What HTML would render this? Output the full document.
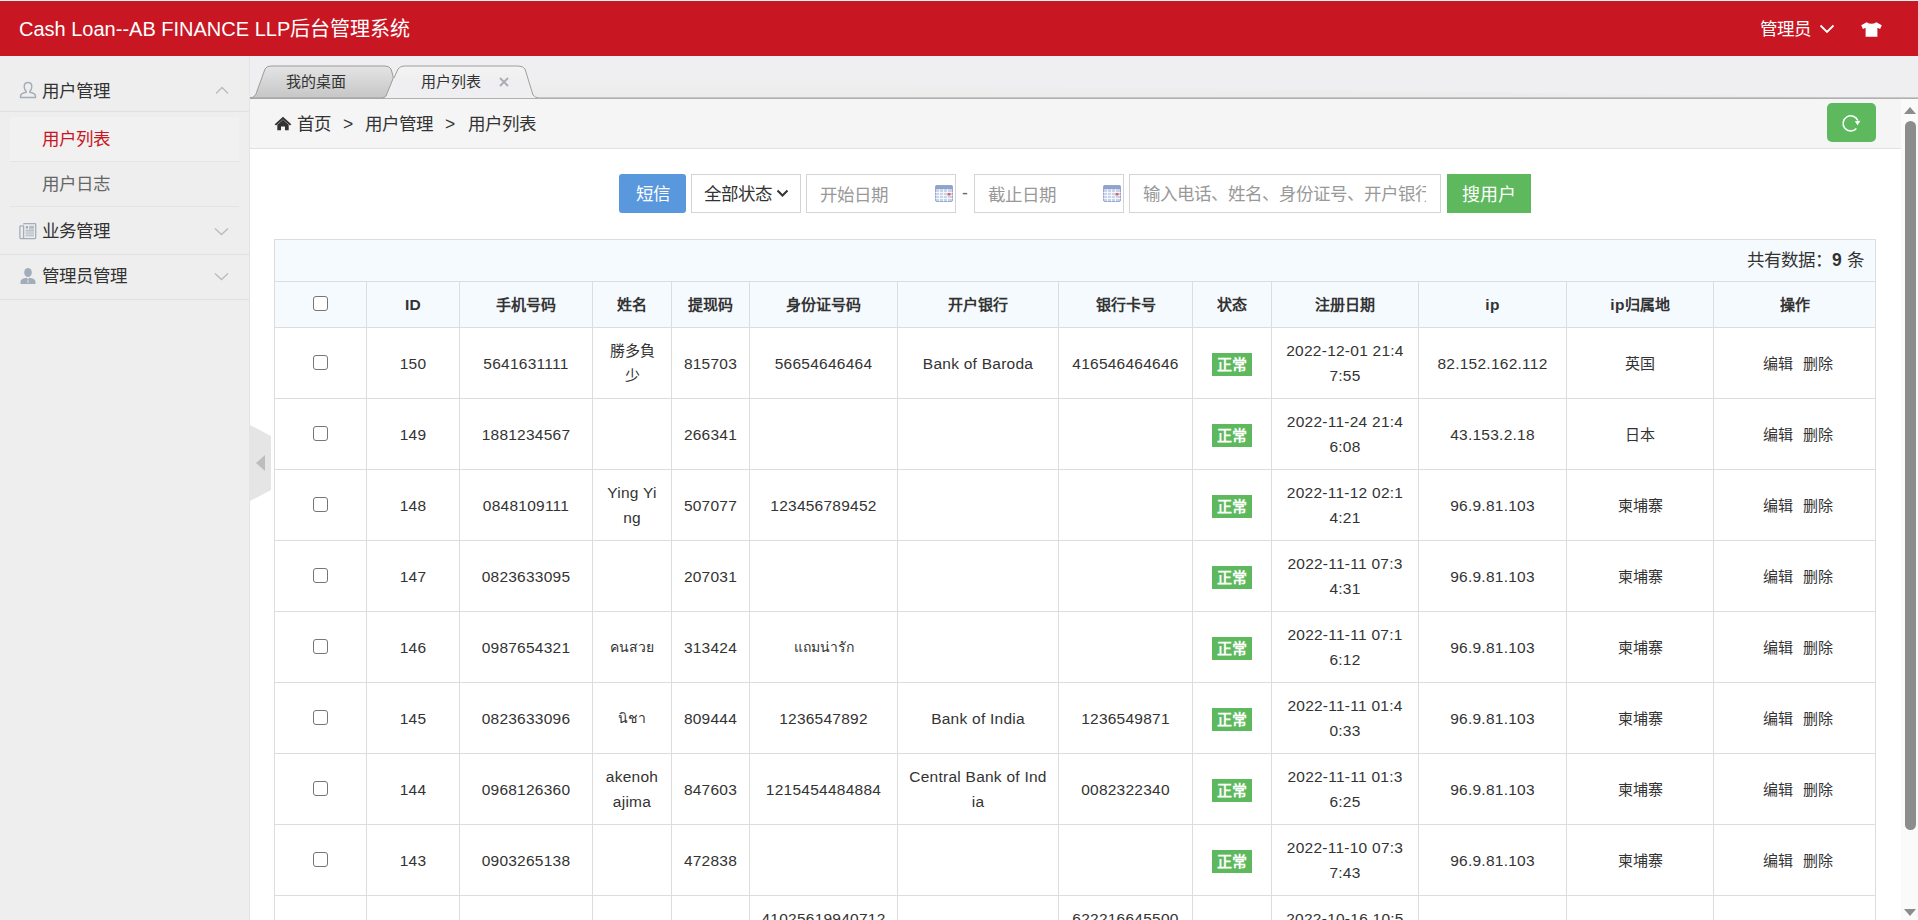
<!DOCTYPE html>
<html lang="zh-CN"><head><meta charset="utf-8">
<style>
*{margin:0;padding:0;box-sizing:border-box}
html,body{width:1918px;height:920px;overflow:hidden;background:#fff;font-family:"Liberation Sans",sans-serif;color:#333}
.abs{position:absolute}
#topline{position:absolute;left:0;top:0;width:1918px;height:1px;background:#e6f4f4}
#header{position:absolute;left:0;top:1px;width:1918px;height:55px;background:#c81623;color:#fff}
#logo{position:absolute;left:19px;top:14px;font-size:20px;line-height:28px;white-space:nowrap}
#admin{position:absolute;left:1760px;top:15px;font-size:17.5px;line-height:26px;white-space:nowrap}
#aside{position:absolute;left:0;top:56px;width:250px;height:864px;background:#eee;border-right:1px solid #e3e3e3}
.dt{position:absolute;left:0;width:249px;height:45px;border-bottom:1px solid #e0e0e0;font-size:17.5px;line-height:26px;color:#333}
.dt span.t{position:absolute;left:42px;top:9px;white-space:nowrap}
.li{position:absolute;left:10px;width:229px;border-bottom:1px solid #e4e4e4;font-size:17.5px;line-height:26px;color:#666}
.li span{position:absolute;left:32px;white-space:nowrap}
#tabnav{position:absolute;left:250px;top:56px;width:1668px;height:43px;background:#efeef0}
#crumb{position:absolute;left:250px;top:99px;width:1651px;height:50px;background:#f5f5f5;border-bottom:1px solid #e2e2e2}
.crumbt{position:absolute;top:111px;font-size:17.5px;line-height:26px;white-space:nowrap;color:#333}
#sb{position:absolute;left:1901px;top:99px;width:17px;height:821px;background:#fafafa}
#thumb{position:absolute;left:1905px;top:121px;width:11px;height:709px;border-radius:6px;background:#8c8c8c}
.btn{position:absolute;color:#fff;font-size:17.5px;line-height:38px;text-align:center;border-radius:3px;white-space:nowrap}
.inp{position:absolute;border:1px solid #d4d4d4;background:#fff;font-size:17.5px;line-height:36px;white-space:nowrap;overflow:hidden;color:#999}
.vl{position:absolute;width:1px;background:#ddd}
.hl{position:absolute;height:1px;background:#ddd}
.c{position:absolute;display:flex;align-items:center;justify-content:center;text-align:center;font-size:15px;line-height:25px;white-space:nowrap;color:#333;overflow:hidden}
.hd{font-weight:bold;background:#f5fafe}
.th{background:#f5fafe}
.cb{display:inline-block;vertical-align:top;margin-top:4px;width:15px;height:15px;border:1.5px solid #767676;border-radius:3px;background:#fff}
.lbl{display:inline-block;position:relative;top:1px;background:#5eb95e;color:#fff;font-weight:bold;font-size:15px;line-height:23px;height:23px;width:40px;text-align:center}
.l{font-size:15.5px;letter-spacing:.25px}
.thai{font-size:14px}
.ops{padding-left:7px}
.op{display:inline-block}
.op2{margin-left:10px}
#caption{position:absolute;left:275px;top:240px;width:1600px;height:41px;background:#f5fafe}
#captxt{position:absolute;right:48px;top:246px;font-size:17.5px;line-height:28px;white-space:nowrap}
</style></head>
<body>
<div id="topline"></div>
<div id="header">
  <div id="logo">Cash Loan--AB FINANCE LLP后台管理系统</div>
  <div id="admin">管理员</div>
  <svg class="abs" style="left:1818.5px;top:23px" width="16" height="10" viewBox="0 0 16 10"><path d="M1.5 1.5 L8 8 L14.5 1.5" fill="none" stroke="#fff" stroke-width="1.8"/></svg>
  <svg class="abs" style="left:1861px;top:21px" width="21" height="15" viewBox="0 0 21 15"><path d="M5.6 0.2 Q10.5 3.4 15.4 0.2 L20.8 3.2 L19.1 6.9 L16.4 5.7 L16.4 14.8 L4.6 14.8 L4.6 5.7 L1.9 6.9 L0.2 3.2 Z" fill="#fff"/></svg>
</div>

<div id="aside">
  <div class="dt" style="top:11px"><span class="t" style="top:11px">用户管理</span></div>
  <div class="li" style="top:61px;height:45px;background:#f1f1f1"><span style="top:9px;color:#c81623">用户列表</span></div>
  <div class="li" style="top:106px;height:45px"><span style="top:9px">用户日志</span></div>
  <div class="dt" style="top:153px;height:46px"><span class="t" style="top:9px">业务管理</span></div>
  <div class="dt" style="top:199px"><span class="t" style="top:8px">管理员管理</span></div>
  <!-- icons -->
  <svg class="abs" style="left:19px;top:25px" width="18" height="18" viewBox="0 0 18 18"><path d="M9 1.5 C6.3 1.5 5.2 3.6 5.2 5.8 C5.2 8 6.3 9.6 7.2 10.3 L7.2 11.2 C4.5 11.8 1.5 13 1.5 15 L1.5 16.5 L16.5 16.5 L16.5 15 C16.5 13 13.5 11.8 10.8 11.2 L10.8 10.3 C11.7 9.6 12.8 8 12.8 5.8 C12.8 3.6 11.7 1.5 9 1.5 Z" fill="none" stroke="#a3adba" stroke-width="1.4"/></svg>
  <svg class="abs" style="left:215px;top:30px" width="14" height="9" viewBox="0 0 14 9"><path d="M1 7.5 L7 1.5 L13 7.5" fill="none" stroke="#bbb" stroke-width="1.3"/></svg>
  <svg class="abs" style="left:19px;top:166px" width="18" height="18" viewBox="0 0 18 18"><path d="M4.6 2.4 Q4.6 1.6 5.4 1.6 L15.9 1.6 Q16.7 1.6 16.7 2.4 L16.7 15.8 Q16.7 16.6 15.9 16.6 L1.7 16.6 Q0.9 16.6 0.9 15.8 L0.9 4.6 Q0.9 3.8 1.7 3.8 L4.6 3.8 M4.6 3.8 V16.6" fill="none" stroke="#a3adba" stroke-width="1.3"/><rect x="6.9" y="4" width="2.1" height="2.7" fill="#a3adba"/><path d="M10 4.3 H15 M10 5.6 H15 M10 6.9 H15 M6.5 8.3 H15 M6.5 10 H15 M6.5 11.9 H15 M6.5 13.8 H15" stroke="#a3adba" stroke-width="0.9"/></svg>
  <svg class="abs" style="left:214px;top:171px" width="15" height="9" viewBox="0 0 15 9"><path d="M1 1.5 L7.5 7.5 L14 1.5" fill="none" stroke="#bbb" stroke-width="1.3"/></svg>
  <svg class="abs" style="left:19px;top:211px" width="18" height="18" viewBox="0 0 18 18"><ellipse cx="9" cy="5.5" rx="3.8" ry="4.5" fill="#a3adba"/><path d="M1.5 17 L1.5 15 C1.5 12.5 4.5 11 7.5 10.8 L9 12 L10.5 10.8 C13.5 11 16.5 12.5 16.5 15 L16.5 17 Z" fill="#a3adba"/><path d="M9 12.5 V16" stroke="#eee" stroke-width="0.8"/></svg>
  <svg class="abs" style="left:214px;top:216px" width="15" height="9" viewBox="0 0 15 9"><path d="M1 1.5 L7.5 7.5 L14 1.5" fill="none" stroke="#bbb" stroke-width="1.3"/></svg>
</div>

<div id="tabnav"></div>
<svg class="abs" style="left:250px;top:56px" width="1668" height="43" viewBox="0 0 1668 43">
  <defs>
    <linearGradient id="g1" x1="0" y1="0" x2="0" y2="1"><stop offset="0" stop-color="#e4e4e4"/><stop offset="1" stop-color="#c6c6c6"/></linearGradient>
    <linearGradient id="g2" x1="0" y1="0" x2="0" y2="1"><stop offset="0" stop-color="#f3f3f3"/><stop offset="1" stop-color="#ebebeb"/></linearGradient>
  </defs>
  <path d="M144 22 L148 13 Q150.5 10 154 10 L268 10 Q273 10 275 13 L283 39 Q285 42 289 42 L1668 42" fill="url(#g2)" stroke="#a0a0a0" stroke-width="1"/>
  <rect x="0" y="42" width="1668" height="1" fill="#b0b0b0"/>
  <path d="M0 42 Q4 42 6 38 L15 13 Q16.5 10 21 10 L135 10 Q139 10 141 13 L143 20 Q143.5 22 142.5 24 L136 40 Q135 42 131 42 Z" fill="url(#g1)" stroke="#9c9c9c" stroke-width="1"/>
  <text x="36" y="31" font-size="15" fill="#333" font-family="Liberation Sans, sans-serif">我的桌面</text>
  <text x="171" y="31" font-size="15" fill="#333" font-family="Liberation Sans, sans-serif">用户列表</text>
  <path d="M250 22 L258 30 M258 22 L250 30" stroke="#a9aeb4" stroke-width="1.8"/>
</svg>

<div id="crumb"></div>
<svg class="abs" style="left:274px;top:116px" width="18" height="15" viewBox="0 0 18 15"><path d="M9 0.8 L17.3 8.2 L16 9.6 L9 3.4 L2 9.6 L0.7 8.2 Z" fill="#333"/><path d="M3.3 8.7 L9 3.8 L14.7 8.7 L14.7 14.2 L11 14.2 L11 10.5 L7 10.5 L7 14.2 L3.3 14.2 Z" fill="#333"/></svg>
<div class="crumbt" style="left:297px">首页</div><div class="crumbt" style="left:343px">&gt;</div><div class="crumbt" style="left:365px">用户管理</div><div class="crumbt" style="left:445px">&gt;</div><div class="crumbt" style="left:468px">用户列表</div>
<div class="btn" style="left:1827px;top:103px;width:49px;height:39px;background:#5eb95e;border-radius:5px"></div>
<svg class="abs" style="left:1840px;top:112px" width="22" height="22" viewBox="0 0 22 22"><path d="M16.4 16.4 A7.6 7.6 0 1 1 17.8 8.6" fill="none" stroke="#fff" stroke-width="1.5"/><path d="M14.8 9.2 L20.4 8.8 L17.6 13.2 Z" fill="#fff"/></svg>

<div id="sb"></div>
<div id="thumb"></div>
<svg class="abs" style="left:1903px;top:106px" width="14" height="9" viewBox="0 0 14 9"><path d="M1 8 L7 1 L13 8 Z" fill="#8c8c8c"/></svg>
<svg class="abs" style="left:1903px;top:908px" width="14" height="9" viewBox="0 0 14 9"><path d="M1 1 L7 8 L13 1 Z" fill="#8c8c8c"/></svg>

<!-- search bar -->
<div class="btn" style="left:619px;top:174px;width:67px;height:39px;background:#5a98de;line-height:40px">短信</div>
<div class="inp" style="left:691px;top:174px;width:110px;height:39px;color:#333"><span style="position:absolute;left:12px;top:1px">全部状态</span></div>
<svg class="abs" style="left:776px;top:189px" width="13" height="9" viewBox="0 0 13 9"><path d="M1.5 1.5 L6.5 6.5 L11.5 1.5" fill="none" stroke="#333" stroke-width="2"/></svg>
<div class="inp" style="left:806px;top:174px;width:150px;height:39px"><span style="position:absolute;left:13px;top:2px">开始日期</span></div>
<div class="abs" style="left:962px;top:181px;font-size:17.5px;line-height:24px;color:#666">-</div>
<div class="inp" style="left:974px;top:174px;width:150px;height:39px"><span style="position:absolute;left:13px;top:2px">截止日期</span></div>
<div class="inp" style="left:1129px;top:174px;width:312px;height:39px"><span style="position:absolute;left:13px;top:1px;width:283px;overflow:hidden">输入电话、姓名、身份证号、开户银行</span></div>
<div class="btn" style="left:1447px;top:174px;width:84px;height:39px;background:#5eb95e;border-radius:0;line-height:42px;font-size:18px">搜用户</div>
<svg class="abs" style="left:935px;top:185px" width="18" height="17" viewBox="0 0 18 17"><rect x="0.5" y="0.5" width="17" height="16" rx="1.5" fill="#c8d4ea" stroke="#98a8c8"/><rect x="0.5" y="0.5" width="17" height="3.5" fill="#8fa3cc"/><path d="M0.5 7.5 H17.5 M0.5 10.5 H17.5 M0.5 13.5 H17.5 M4.5 4 V16.5 M8.5 4 V16.5 M12.5 4 V16.5" stroke="#f4f6fb" stroke-width="1"/><rect x="12.5" y="8" width="3" height="2.5" fill="#e06060"/></svg>
<svg class="abs" style="left:1103px;top:185px" width="18" height="17" viewBox="0 0 18 17"><rect x="0.5" y="0.5" width="17" height="16" rx="1.5" fill="#c8d4ea" stroke="#98a8c8"/><rect x="0.5" y="0.5" width="17" height="3.5" fill="#8fa3cc"/><path d="M0.5 7.5 H17.5 M0.5 10.5 H17.5 M0.5 13.5 H17.5 M4.5 4 V16.5 M8.5 4 V16.5 M12.5 4 V16.5" stroke="#f4f6fb" stroke-width="1"/><rect x="12.5" y="8" width="3" height="2.5" fill="#e06060"/></svg>

<!-- table -->
<div id="caption"></div>
<div class="abs" style="left:274px;top:239px;width:1602px;height:1px;background:#e8e8e8"></div>
<div id="captxt" style="left:1747px;right:auto">共有数据：<b>9</b> 条</div>
<div class="vl" style="left:274px;top:239px;height:681px"></div>
<div class="vl" style="left:366px;top:281px;height:639px"></div>
<div class="vl" style="left:459px;top:281px;height:639px"></div>
<div class="vl" style="left:592px;top:281px;height:639px"></div>
<div class="vl" style="left:671px;top:281px;height:639px"></div>
<div class="vl" style="left:749px;top:281px;height:639px"></div>
<div class="vl" style="left:897px;top:281px;height:639px"></div>
<div class="vl" style="left:1058px;top:281px;height:639px"></div>
<div class="vl" style="left:1192px;top:281px;height:639px"></div>
<div class="vl" style="left:1271px;top:281px;height:639px"></div>
<div class="vl" style="left:1418px;top:281px;height:639px"></div>
<div class="vl" style="left:1566px;top:281px;height:639px"></div>
<div class="vl" style="left:1713px;top:281px;height:639px"></div>
<div class="vl" style="left:1875px;top:239px;height:681px"></div>
<div class="hl" style="left:274px;top:239px;width:1602px"></div>
<div class="hl" style="left:274px;top:281px;width:1602px"></div>
<div class="hl" style="left:274px;top:327px;width:1602px"></div>
<div class="hl" style="left:274px;top:398px;width:1602px"></div>
<div class="hl" style="left:274px;top:469px;width:1602px"></div>
<div class="hl" style="left:274px;top:540px;width:1602px"></div>
<div class="hl" style="left:274px;top:611px;width:1602px"></div>
<div class="hl" style="left:274px;top:682px;width:1602px"></div>
<div class="hl" style="left:274px;top:753px;width:1602px"></div>
<div class="hl" style="left:274px;top:824px;width:1602px"></div>
<div class="hl" style="left:274px;top:895px;width:1602px"></div>
<div class="hl" style="left:274px;top:966px;width:1602px"></div>
<div class="c th" style="left:275px;top:282px;width:91px;height:45px"><div><span class="cb"></span></div></div>
<div class="c hd" style="left:367px;top:282px;width:92px;height:45px"><div><span class="l">ID</span></div></div>
<div class="c hd" style="left:460px;top:282px;width:132px;height:45px"><div>手机号码</div></div>
<div class="c hd" style="left:593px;top:282px;width:78px;height:45px"><div>姓名</div></div>
<div class="c hd" style="left:672px;top:282px;width:77px;height:45px"><div>提现码</div></div>
<div class="c hd" style="left:750px;top:282px;width:147px;height:45px"><div>身份证号码</div></div>
<div class="c hd" style="left:898px;top:282px;width:160px;height:45px"><div>开户银行</div></div>
<div class="c hd" style="left:1059px;top:282px;width:133px;height:45px"><div>银行卡号</div></div>
<div class="c hd" style="left:1193px;top:282px;width:78px;height:45px"><div>状态</div></div>
<div class="c hd" style="left:1272px;top:282px;width:146px;height:45px"><div>注册日期</div></div>
<div class="c hd" style="left:1419px;top:282px;width:147px;height:45px"><div><span class="l">ip</span></div></div>
<div class="c hd" style="left:1567px;top:282px;width:146px;height:45px"><div><span class="l">ip</span>归属地</div></div>
<div class="c hd" style="left:1714px;top:282px;width:161px;height:45px"><div>操作</div></div>
<div class="c" style="left:275px;top:328px;width:91px;height:70px"><div><span class="cb"></span></div></div>
<div class="c" style="left:367px;top:328px;width:92px;height:70px"><div><span class="l">150</span></div></div>
<div class="c" style="left:460px;top:328px;width:132px;height:70px"><div><span class="l">5641631111</span></div></div>
<div class="c" style="left:593px;top:328px;width:78px;height:70px"><div>勝多負<br>少</div></div>
<div class="c" style="left:672px;top:328px;width:77px;height:70px"><div><span class="l">815703</span></div></div>
<div class="c" style="left:750px;top:328px;width:147px;height:70px"><div><span class="l">56654646464</span></div></div>
<div class="c" style="left:898px;top:328px;width:160px;height:70px"><div><span class="l">Bank of Baroda</span></div></div>
<div class="c" style="left:1059px;top:328px;width:133px;height:70px"><div><span class="l">416546464646</span></div></div>
<div class="c" style="left:1193px;top:328px;width:78px;height:70px"><div><span class="lbl">正常</span></div></div>
<div class="c" style="left:1272px;top:328px;width:146px;height:70px"><div><span class="l">2022-12-01 21:4</span><br><span class="l">7:55</span></div></div>
<div class="c" style="left:1419px;top:328px;width:147px;height:70px"><div><span class="l">82.152.162.112</span></div></div>
<div class="c" style="left:1567px;top:328px;width:146px;height:70px"><div>英国</div></div>
<div class="c ops" style="left:1714px;top:328px;width:161px;height:70px"><div><span class="op">编辑</span><span class="op op2">删除</span></div></div>
<div class="c" style="left:275px;top:399px;width:91px;height:70px"><div><span class="cb"></span></div></div>
<div class="c" style="left:367px;top:399px;width:92px;height:70px"><div><span class="l">149</span></div></div>
<div class="c" style="left:460px;top:399px;width:132px;height:70px"><div><span class="l">1881234567</span></div></div>
<div class="c" style="left:593px;top:399px;width:78px;height:70px"><div></div></div>
<div class="c" style="left:672px;top:399px;width:77px;height:70px"><div><span class="l">266341</span></div></div>
<div class="c" style="left:750px;top:399px;width:147px;height:70px"><div></div></div>
<div class="c" style="left:898px;top:399px;width:160px;height:70px"><div></div></div>
<div class="c" style="left:1059px;top:399px;width:133px;height:70px"><div></div></div>
<div class="c" style="left:1193px;top:399px;width:78px;height:70px"><div><span class="lbl">正常</span></div></div>
<div class="c" style="left:1272px;top:399px;width:146px;height:70px"><div><span class="l">2022-11-24 21:4</span><br><span class="l">6:08</span></div></div>
<div class="c" style="left:1419px;top:399px;width:147px;height:70px"><div><span class="l">43.153.2.18</span></div></div>
<div class="c" style="left:1567px;top:399px;width:146px;height:70px"><div>日本</div></div>
<div class="c ops" style="left:1714px;top:399px;width:161px;height:70px"><div><span class="op">编辑</span><span class="op op2">删除</span></div></div>
<div class="c" style="left:275px;top:470px;width:91px;height:70px"><div><span class="cb"></span></div></div>
<div class="c" style="left:367px;top:470px;width:92px;height:70px"><div><span class="l">148</span></div></div>
<div class="c" style="left:460px;top:470px;width:132px;height:70px"><div><span class="l">0848109111</span></div></div>
<div class="c" style="left:593px;top:470px;width:78px;height:70px"><div><span class="l">Ying Yi</span><br><span class="l">ng</span></div></div>
<div class="c" style="left:672px;top:470px;width:77px;height:70px"><div><span class="l">507077</span></div></div>
<div class="c" style="left:750px;top:470px;width:147px;height:70px"><div><span class="l">123456789452</span></div></div>
<div class="c" style="left:898px;top:470px;width:160px;height:70px"><div></div></div>
<div class="c" style="left:1059px;top:470px;width:133px;height:70px"><div></div></div>
<div class="c" style="left:1193px;top:470px;width:78px;height:70px"><div><span class="lbl">正常</span></div></div>
<div class="c" style="left:1272px;top:470px;width:146px;height:70px"><div><span class="l">2022-11-12 02:1</span><br><span class="l">4:21</span></div></div>
<div class="c" style="left:1419px;top:470px;width:147px;height:70px"><div><span class="l">96.9.81.103</span></div></div>
<div class="c" style="left:1567px;top:470px;width:146px;height:70px"><div>柬埔寨</div></div>
<div class="c ops" style="left:1714px;top:470px;width:161px;height:70px"><div><span class="op">编辑</span><span class="op op2">删除</span></div></div>
<div class="c" style="left:275px;top:541px;width:91px;height:70px"><div><span class="cb"></span></div></div>
<div class="c" style="left:367px;top:541px;width:92px;height:70px"><div><span class="l">147</span></div></div>
<div class="c" style="left:460px;top:541px;width:132px;height:70px"><div><span class="l">0823633095</span></div></div>
<div class="c" style="left:593px;top:541px;width:78px;height:70px"><div></div></div>
<div class="c" style="left:672px;top:541px;width:77px;height:70px"><div><span class="l">207031</span></div></div>
<div class="c" style="left:750px;top:541px;width:147px;height:70px"><div></div></div>
<div class="c" style="left:898px;top:541px;width:160px;height:70px"><div></div></div>
<div class="c" style="left:1059px;top:541px;width:133px;height:70px"><div></div></div>
<div class="c" style="left:1193px;top:541px;width:78px;height:70px"><div><span class="lbl">正常</span></div></div>
<div class="c" style="left:1272px;top:541px;width:146px;height:70px"><div><span class="l">2022-11-11 07:3</span><br><span class="l">4:31</span></div></div>
<div class="c" style="left:1419px;top:541px;width:147px;height:70px"><div><span class="l">96.9.81.103</span></div></div>
<div class="c" style="left:1567px;top:541px;width:146px;height:70px"><div>柬埔寨</div></div>
<div class="c ops" style="left:1714px;top:541px;width:161px;height:70px"><div><span class="op">编辑</span><span class="op op2">删除</span></div></div>
<div class="c" style="left:275px;top:612px;width:91px;height:70px"><div><span class="cb"></span></div></div>
<div class="c" style="left:367px;top:612px;width:92px;height:70px"><div><span class="l">146</span></div></div>
<div class="c" style="left:460px;top:612px;width:132px;height:70px"><div><span class="l">0987654321</span></div></div>
<div class="c" style="left:593px;top:612px;width:78px;height:70px"><div><span class="thai">คนสวย</span></div></div>
<div class="c" style="left:672px;top:612px;width:77px;height:70px"><div><span class="l">313424</span></div></div>
<div class="c" style="left:750px;top:612px;width:147px;height:70px"><div><span class="thai">แถมน่ารัก</span></div></div>
<div class="c" style="left:898px;top:612px;width:160px;height:70px"><div></div></div>
<div class="c" style="left:1059px;top:612px;width:133px;height:70px"><div></div></div>
<div class="c" style="left:1193px;top:612px;width:78px;height:70px"><div><span class="lbl">正常</span></div></div>
<div class="c" style="left:1272px;top:612px;width:146px;height:70px"><div><span class="l">2022-11-11 07:1</span><br><span class="l">6:12</span></div></div>
<div class="c" style="left:1419px;top:612px;width:147px;height:70px"><div><span class="l">96.9.81.103</span></div></div>
<div class="c" style="left:1567px;top:612px;width:146px;height:70px"><div>柬埔寨</div></div>
<div class="c ops" style="left:1714px;top:612px;width:161px;height:70px"><div><span class="op">编辑</span><span class="op op2">删除</span></div></div>
<div class="c" style="left:275px;top:683px;width:91px;height:70px"><div><span class="cb"></span></div></div>
<div class="c" style="left:367px;top:683px;width:92px;height:70px"><div><span class="l">145</span></div></div>
<div class="c" style="left:460px;top:683px;width:132px;height:70px"><div><span class="l">0823633096</span></div></div>
<div class="c" style="left:593px;top:683px;width:78px;height:70px"><div><span class="thai">นิชา</span></div></div>
<div class="c" style="left:672px;top:683px;width:77px;height:70px"><div><span class="l">809444</span></div></div>
<div class="c" style="left:750px;top:683px;width:147px;height:70px"><div><span class="l">1236547892</span></div></div>
<div class="c" style="left:898px;top:683px;width:160px;height:70px"><div><span class="l">Bank of India</span></div></div>
<div class="c" style="left:1059px;top:683px;width:133px;height:70px"><div><span class="l">1236549871</span></div></div>
<div class="c" style="left:1193px;top:683px;width:78px;height:70px"><div><span class="lbl">正常</span></div></div>
<div class="c" style="left:1272px;top:683px;width:146px;height:70px"><div><span class="l">2022-11-11 01:4</span><br><span class="l">0:33</span></div></div>
<div class="c" style="left:1419px;top:683px;width:147px;height:70px"><div><span class="l">96.9.81.103</span></div></div>
<div class="c" style="left:1567px;top:683px;width:146px;height:70px"><div>柬埔寨</div></div>
<div class="c ops" style="left:1714px;top:683px;width:161px;height:70px"><div><span class="op">编辑</span><span class="op op2">删除</span></div></div>
<div class="c" style="left:275px;top:754px;width:91px;height:70px"><div><span class="cb"></span></div></div>
<div class="c" style="left:367px;top:754px;width:92px;height:70px"><div><span class="l">144</span></div></div>
<div class="c" style="left:460px;top:754px;width:132px;height:70px"><div><span class="l">0968126360</span></div></div>
<div class="c" style="left:593px;top:754px;width:78px;height:70px"><div><span class="l">akenoh</span><br><span class="l">ajima</span></div></div>
<div class="c" style="left:672px;top:754px;width:77px;height:70px"><div><span class="l">847603</span></div></div>
<div class="c" style="left:750px;top:754px;width:147px;height:70px"><div><span class="l">1215454484884</span></div></div>
<div class="c" style="left:898px;top:754px;width:160px;height:70px"><div><span class="l">Central Bank of Ind</span><br><span class="l">ia</span></div></div>
<div class="c" style="left:1059px;top:754px;width:133px;height:70px"><div><span class="l">0082322340</span></div></div>
<div class="c" style="left:1193px;top:754px;width:78px;height:70px"><div><span class="lbl">正常</span></div></div>
<div class="c" style="left:1272px;top:754px;width:146px;height:70px"><div><span class="l">2022-11-11 01:3</span><br><span class="l">6:25</span></div></div>
<div class="c" style="left:1419px;top:754px;width:147px;height:70px"><div><span class="l">96.9.81.103</span></div></div>
<div class="c" style="left:1567px;top:754px;width:146px;height:70px"><div>柬埔寨</div></div>
<div class="c ops" style="left:1714px;top:754px;width:161px;height:70px"><div><span class="op">编辑</span><span class="op op2">删除</span></div></div>
<div class="c" style="left:275px;top:825px;width:91px;height:70px"><div><span class="cb"></span></div></div>
<div class="c" style="left:367px;top:825px;width:92px;height:70px"><div><span class="l">143</span></div></div>
<div class="c" style="left:460px;top:825px;width:132px;height:70px"><div><span class="l">0903265138</span></div></div>
<div class="c" style="left:593px;top:825px;width:78px;height:70px"><div></div></div>
<div class="c" style="left:672px;top:825px;width:77px;height:70px"><div><span class="l">472838</span></div></div>
<div class="c" style="left:750px;top:825px;width:147px;height:70px"><div></div></div>
<div class="c" style="left:898px;top:825px;width:160px;height:70px"><div></div></div>
<div class="c" style="left:1059px;top:825px;width:133px;height:70px"><div></div></div>
<div class="c" style="left:1193px;top:825px;width:78px;height:70px"><div><span class="lbl">正常</span></div></div>
<div class="c" style="left:1272px;top:825px;width:146px;height:70px"><div><span class="l">2022-11-10 07:3</span><br><span class="l">7:43</span></div></div>
<div class="c" style="left:1419px;top:825px;width:147px;height:70px"><div><span class="l">96.9.81.103</span></div></div>
<div class="c" style="left:1567px;top:825px;width:146px;height:70px"><div>柬埔寨</div></div>
<div class="c ops" style="left:1714px;top:825px;width:161px;height:70px"><div><span class="op">编辑</span><span class="op op2">删除</span></div></div>
<div class="c" style="left:367px;top:896px;width:92px;height:70px"><div></div></div>
<div class="c" style="left:460px;top:896px;width:132px;height:70px"><div></div></div>
<div class="c" style="left:593px;top:896px;width:78px;height:70px"><div></div></div>
<div class="c" style="left:672px;top:896px;width:77px;height:70px"><div></div></div>
<div class="c" style="left:750px;top:896px;width:147px;height:70px"><div><span class="l">41025619940712</span><br><span class="l">xxxx</span></div></div>
<div class="c" style="left:898px;top:896px;width:160px;height:70px"><div></div></div>
<div class="c" style="left:1059px;top:896px;width:133px;height:70px"><div><span class="l">622216645500</span><br><span class="l">xxxx</span></div></div>
<div class="c" style="left:1193px;top:896px;width:78px;height:70px"><div></div></div>
<div class="c" style="left:1272px;top:896px;width:146px;height:70px"><div><span class="l">2022-10-16 10:5</span><br><span class="l">1:00</span></div></div>
<div class="c" style="left:1419px;top:896px;width:147px;height:70px"><div></div></div>
<div class="c" style="left:1567px;top:896px;width:146px;height:70px"><div></div></div>
<div class="c" style="left:1714px;top:896px;width:161px;height:70px"><div></div></div>

<!-- collapse handle -->
<svg class="abs" style="left:250px;top:424px" width="22" height="78" viewBox="0 0 22 78"><path d="M0 1 L21 12 L21 66 L0 77 Z" fill="#e5e5e5"/><path d="M15 31 L6 39 L15 47 Z" fill="#bdbdbd"/></svg>
</body></html>
